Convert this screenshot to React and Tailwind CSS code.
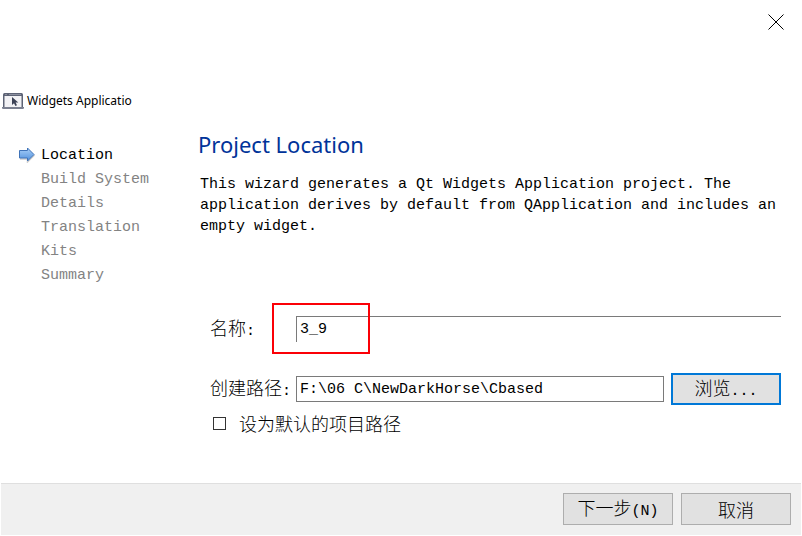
import React, { useState } from 'react';

const steps = ['Location', 'Build System', 'Details', 'Translation', 'Kits', 'Summary'];

// Latin text is set smaller so that two letters are as wide as one Chinese character
const mono = 'font-["Liberation_Mono","Noto_Sans_CJK_SC",monospace] text-[15px]';
const cjk = 'font-["Noto_Sans_CJK_SC",sans-serif] text-[18px] font-light';

const button = 'w-[110px] h-8 shrink-0 text-center whitespace-nowrap bg-[#e1e1e1]';

function CloseIcon() {
  return (
    <svg className="w-4 h-4" viewBox="0 0 16 16" fill="none" stroke="#000">
      <path d="M0.5 0.5 15.5 15.5M15.5 0.5 0.5 15.5" />
    </svg>
  );
}

function WidgetsIcon() {
  return (
    <svg className="w-6 h-[18px]" viewBox="0 0 24 18">
      <path d="M3.5 1h17a1.5 1.5 0 0 1 1.5 1.5V15H2V2.5A1.5 1.5 0 0 1 3.5 1z" fill="#5d6375" />
      <path d="M3.5 4h17v11h-17z" fill="#f2f2f5" />
      <path d="M4 2.5h2M8 2.5h12" stroke="#a9adba" strokeWidth="0.6" />
      <path d="M1 15h22v0.8a1.2 1.2 0 0 1-1.2 1.2H2.2A1.2 1.2 0 0 1 1 15.800z" fill="#7b8090" />
      <path d="M11 5v8l2-1.700 1.400 2.700 1.600-0.800-1.400-2.700h2.700z" fill="#3c4256" />
    </svg>
  );
}

function StepArrow() {
  return (
    <svg className="w-[17px] h-[17px]" viewBox="0 0 17 17">
      <defs>
        <linearGradient id="arrow" x1="0" y1="0" x2="0" y2="1">
          <stop offset="0" stopColor="#a9d0f8" />
          <stop offset="1" stopColor="#4f8fdc" />
        </linearGradient>
      </defs>
      <path d="M2 13h7.500v3l7-7" fill="none" stroke="#000" strokeOpacity="0.2" strokeWidth="1.5" />
      <path d="M1.500 4.500h8v-2.500l6.500 6.500-6.500 6.500v-3h-8z" fill="url(#arrow)" stroke="#3f73b8" />
    </svg>
  );
}

export default function App() {
  const [name, setName] = useState('3_9');
  const [path, setPath] = useState('F:\\06 C\\NewDarkHorse\\Cbased');
  const [isDefault, setIsDefault] = useState(false);

  return (
    <div className={`min-h-screen flex flex-col bg-white text-black ${mono}`}>
      {/* Title bar */}
      <div className="flex justify-end pt-[14px] pr-[18px]">
        <button aria-label="Close">
          <CloseIcon />
        </button>
      </div>

      <header className='mt-[61px] h-5 pl-px flex items-center gap-[2px] font-["Noto_Sans",sans-serif] text-xs'>
        <WidgetsIcon />
        <span>Widgets Applicatio</span>
      </header>

      <div className="flex-1 flex">
        {/* Steps */}
        <nav className="w-[198px] shrink-0 pt-[33px] pl-[18px]">
          <ol>
            {steps.map((step, i) => (
              <li
                key={step}
                className={`h-6 flex items-center gap-[6px] ${i === 0 ? 'text-black' : 'text-[#838383]'}`}
              >
                <span className="w-[17px] h-5">{i === 0 && <StepArrow />}</span>
                {step}
              </li>
            ))}
          </ol>
        </nav>

        <main className="flex-1 min-w-0 pt-[17px] pr-[21px]">
          <h1 className='text-[22px] leading-8 text-[#003399] font-["Noto_Sans",sans-serif]'>
            Project Location
          </h1>
          <p className="mt-[14px] pl-[2px] -mr-3 leading-[21px]">
            This wizard generates a Qt Widgets Application project. The application derives by
            default from QApplication and includes an empty widget.
          </p>

          <form className="mt-[79px] pl-3" onSubmit={(e) => e.preventDefault()}>
            <div className="relative h-[26px] flex items-center">
              <label htmlFor="name" className={`w-[86px] shrink-0 leading-[26px] ${cjk}`}>
                名称<span className={mono}>:</span>
              </label>
              <input
                id="name"
                value={name}
                onChange={(e) => setName(e.target.value)}
                className="flex-1 min-w-0 h-[26px] pl-[3px] border-t border-l border-[#7a7a7a] outline-none"
              />
              <div className="absolute left-[62px] -top-[13px] w-[98px] h-[51px] border-2 border-[#fb0007] pointer-events-none" />
            </div>

            <div className="mt-[31px] h-8 flex items-center">
              <label htmlFor="path" className={`w-[86px] shrink-0 whitespace-nowrap leading-[26px] ${cjk}`}>
                创建路径<span className={mono}>:</span>
              </label>
              <input
                id="path"
                value={path}
                onChange={(e) => setPath(e.target.value)}
                className="flex-1 min-w-0 h-[26px] pl-[3px] border border-[#7a7a7a] outline-none"
              />
              <button type="button" className={`ml-[7px] border-2 border-[#0078d7] leading-6 ${button} ${cjk}`}>
                浏览<span className={mono}>...</span>
              </button>
            </div>

            <div className="mt-[6px] pl-[3px] h-6 flex items-center gap-[13px]">
              <input
                id="default"
                type="checkbox"
                checked={isDefault}
                onChange={(e) => setIsDefault(e.target.checked)}
                className="appearance-none w-[13px] h-[13px] border border-[#333] bg-white checked:bg-[#333]"
              />
              <label htmlFor="default" className={`leading-6 ${cjk}`}>
                设为默认的项目路径
              </label>
            </div>
          </form>
        </main>
      </div>

      <footer className="mx-px mb-px pt-[9px] pb-[10px] pr-[10px] flex justify-end gap-2 bg-[#f0f0f0] border-t border-[#dfdfdf]">
        <button className={`border border-[#adadad] leading-6 ${button} ${cjk}`}>
          下一步<span className={mono}>(N)</span>
        </button>
        <button className={`border border-[#adadad] leading-6 ${button} ${cjk}`}>取消</button>
      </footer>
    </div>
  );
}
